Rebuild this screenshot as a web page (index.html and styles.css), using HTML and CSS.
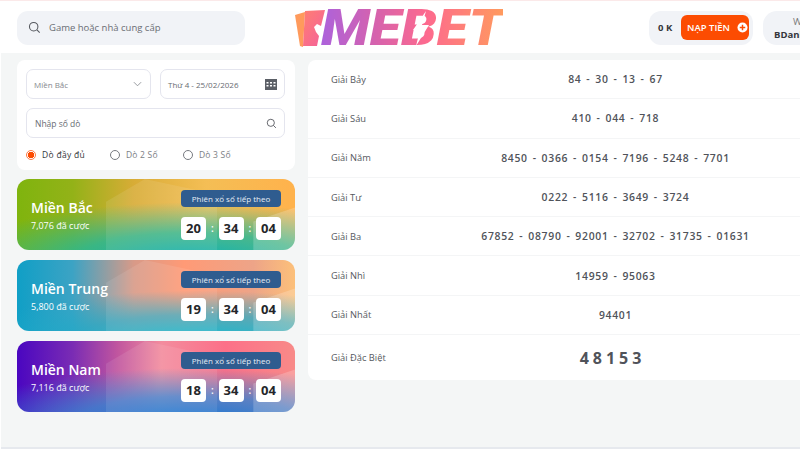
FILE: index.html
```html
<!DOCTYPE html>
<html lang="vi">
<head>
  <meta charset="UTF-8" />
  <meta name="viewport" content="width=device-width, initial-scale=1.0"/>
  <title>MEBET - Dò số</title>
  <link rel="stylesheet" href="styles.css">
</head>
<body>
  <header class="topbar">
    <div class="search-box">
      <svg class="icon-search" viewBox="0 0 16 16"><circle cx="7" cy="7" r="5.2"/><path d="M11 11l3.4 3.4"/></svg>
      <span>Game hoặc nhà cung cấp</span>
    </div>

    <div class="logo">
      <svg class="logo-cards" viewBox="0 0 30 38">
        <defs>
          <linearGradient id="cardFront" x1="0" y1="0" x2="1" y2="1">
            <stop offset="0" stop-color="#ff7f72"/>
            <stop offset="1" stop-color="#f4609c"/>
          </linearGradient>
        </defs>
        <path d="M0 6l10-3-2 35-3-1z" fill="#ff9a5c"/>
        <path d="M10 2l20-1-4 16-4-2-3 3 2 5 3 4-2 10H8z" fill="url(#cardFront)"/>
      </svg>
      <span class="logo-text">MEBET</span>
      <svg class="logo-bolt" viewBox="0 0 18 36"><path d="M15 0L2 19h7L5 35l13-21h-7z"/></svg>
    </div>

    <div class="wallet">
      <span class="balance">0 K</span>
      <button class="deposit">NẠP TIỀN
        <svg viewBox="0 0 12 12"><circle cx="6" cy="6" r="5.5" fill="#fff"/><path d="M6 3v6M3 6h6" stroke="#fc4c02" stroke-width="1.6"/></svg>
      </button>
    </div>

    <div class="user-chip">
      <div class="user-hello">Wel</div>
      <div class="user-name">BDanh</div>
    </div>
  </header>

  <main class="content">
    <section class="sidebar">
      <div class="filter-card">
        <div class="filter-row">
          <div class="field field-half">
            <span class="field-muted">Miền Bắc</span>
            <svg class="icon-chevron" viewBox="0 0 10 6"><path d="M1 1l4 4 4-4"/></svg>
          </div>
          <div class="field field-half">
            <span>Thứ 4 - 25/02/2026</span>
            <svg class="icon-calendar" viewBox="0 0 12 12">
              <path fill="#5b5f66" d="M0 1h12v11H0z"/>
              <path fill="#fff" d="M1.500 4h2v1.500h-2zM5 4h2v1.500H5zM8.500 4h2v1.500h-2zM1.500 7h2v1.500h-2zM5 7h2v1.500H5zM8.500 7h2v1.500h-2z"/>
            </svg>
          </div>
        </div>
        <div class="field field-search">
          <span>Nhập số dò</span>
          <svg class="icon-search small" viewBox="0 0 16 16"><circle cx="7" cy="7" r="5.200"/><path d="M11 11l3.400 3.400"/></svg>
        </div>
        <div class="radios">
          <label class="radio active"><i></i>Dò đầy đủ</label>
          <label class="radio"><i></i>Dò 2 Số</label>
          <label class="radio"><i></i>Dò 3 Số</label>
        </div>
      </div>

      <div class="region-card bac">
        <div class="region-info">
          <h3>Miền Bắc</h3>
          <p>7,076 đã cược</p>
        </div>
        <div class="region-timer">
          <div class="next-label">Phiên xổ số tiếp theo</div>
          <div class="clock"><b>20</b><em>:</em><b>34</b><em>:</em><b>04</b></div>
        </div>
      </div>

      <div class="region-card trung">
        <div class="region-info">
          <h3>Miền Trung</h3>
          <p>5,800 đã cược</p>
        </div>
        <div class="region-timer">
          <div class="next-label">Phiên xổ số tiếp theo</div>
          <div class="clock"><b>19</b><em>:</em><b>34</b><em>:</em><b>04</b></div>
        </div>
      </div>

      <div class="region-card nam">
        <div class="region-info">
          <h3>Miền Nam</h3>
          <p>7,116 đã cược</p>
        </div>
        <div class="region-timer">
          <div class="next-label">Phiên xổ số tiếp theo</div>
          <div class="clock"><b>18</b><em>:</em><b>34</b><em>:</em><b>04</b></div>
        </div>
      </div>
    </section>

    <section class="results">
      <div class="prize-row"><span class="prize-name">Giải Bảy</span><span class="prize-nums">84 - 30 - 13 - 67</span></div>
      <div class="prize-row"><span class="prize-name">Giải Sáu</span><span class="prize-nums">410 - 044 - 718</span></div>
      <div class="prize-row"><span class="prize-name">Giải Năm</span><span class="prize-nums">8450 - 0366 - 0154 - 7196 - 5248 - 7701</span></div>
      <div class="prize-row"><span class="prize-name">Giải Tư</span><span class="prize-nums">0222 - 5116 - 3649 - 3724</span></div>
      <div class="prize-row"><span class="prize-name">Giải Ba</span><span class="prize-nums">67852 - 08790 - 92001 - 32702 - 31735 - 01631</span></div>
      <div class="prize-row"><span class="prize-name">Giải Nhì</span><span class="prize-nums">14959 - 95063</span></div>
      <div class="prize-row"><span class="prize-name">Giải Nhất</span><span class="prize-nums">94401</span></div>
      <div class="prize-row special"><span class="prize-name">Giải Đặc Biệt</span><span class="prize-nums">48153</span></div>
    </section>
  </main>
  <div class="page-end"></div>
</body>
</html>
```

FILE: styles.css
```css
* {
  box-sizing: border-box;
}

html, body {
  margin: 0;
  height: 450px;
  overflow: hidden;
}

body {
  width: 800px;
  font-family: "Open Sans", "Noto Sans", sans-serif;
  background-color: #fff;
  color: #50535a;
  padding-left: 1px;
}

/* header */
.topbar {
  display: flex;
  align-items: center;
  height: 53px;
  margin-left: -1px;
  padding-left: 17px;
  padding-top: 1px;
  background-color: #fff;
  border-top: 1px solid #fbe9e9;
  width: 900px;
}

.search-box {
  display: flex;
  align-items: center;
  flex-shrink: 0;
  width: 228px;
  height: 34px;
  padding-left: 11px;
  gap: 8px;
  background-color: #f1f3f7;
  border-radius: 11px;
  font-size: 9.5px;
  color: #6a6d74;
}

.icon-search {
  width: 13px;
  height: 13px;
  fill: none;
  stroke: #55585e;
  stroke-width: 1.300;
}

.icon-search.small {
  width: 11px;
  height: 11px;
}

.logo {
  position: relative;
  display: flex;
  align-items: center;
  flex-shrink: 0;
  width: 210px;
  height: 40px;
  margin-left: 50px;
}

.logo-cards {
  width: 30px;
  height: 38px;
  flex-shrink: 0;
}

.logo-text {
  margin-left: -4px;
  font-family: Roboto, "Open Sans", sans-serif;
  font-size: 50px;
  line-height: 1.2;
  font-weight: 900;
  font-style: italic;
  background: linear-gradient(90deg, #ac62dc 0%, #d662ad 30%, #fd6a8e 58%, #ff9a5e 100%);
  -webkit-background-clip: text;
  background-clip: text;
  color: transparent;
  transform: scaleX(1.147);
  transform-origin: left center;
}

/* the bolt sits on top of the B */
.logo-bolt {
  position: absolute;
  left: 116px;
  top: 3px;
  width: 18px;
  height: 36px;
  fill: #fff;
}

.wallet {
  display: flex;
  align-items: center;
  justify-content: space-between;
  flex-shrink: 0;
  width: 104px;
  height: 34px;
  margin-left: 144px;
  padding: 0 4px 0 9px;
  background-color: #f1f3f7;
  border-radius: 12px;
}

.balance {
  font-size: 9.500px;
  font-weight: 700;
  color: #34363b;
}

.deposit {
  display: flex;
  align-items: center;
  gap: 7px;
  width: 68px;
  height: 25px;
  padding: 0 0 0 6px;
  border: 0;
  border-radius: 6px;
  background-color: #fc4c02;
  color: #fff;
  font-family: inherit;
  font-size: 9.500px;
  font-weight: 600;
}

.deposit svg {
  width: 11px;
  height: 11px;
}

.user-chip {
  flex-shrink: 0;
  width: 90px;
  height: 34px;
  margin-left: 10px;
  padding: 4px 0 0 11px;
  background-color: #f1f3f7;
  border-radius: 14px;
  font-size: 9.500px;
}

.user-hello {
  margin-left: 19px;
  color: #777;
  line-height: 13px;
}

.user-name {
  font-weight: 700;
  color: #34363b;
  line-height: 13px;
}

/* main area */
.content {
  display: flex;
  align-items: flex-start;
  height: 394px;
  padding: 7px 0 0 16px;
  background-color: #f4f6f6;
}

.sidebar {
  display: flex;
  flex-direction: column;
  gap: 10px;
  width: 278px;
  flex-shrink: 0;
}

.filter-card {
  height: 110px;
  padding: 9px 10px 0 9px;
  margin-bottom: -1px;
  background-color: #fff;
  border-radius: 8px;
}

.filter-row {
  display: flex;
  gap: 9px;
}

.field {
  display: flex;
  align-items: center;
  justify-content: space-between;
  height: 30px;
  border: 1px solid #e4e5ee;
  border-radius: 7px;
  font-size: 8px;
  color: #686b72;
}

.field-half {
  flex: 1;
  padding: 0 7px;
}

.field-muted {
  color: #85888e;
}

.field-search {
  margin-top: 9px;
  padding: 0 7px 0 8px;
  font-size: 8.500px;
}

.icon-chevron {
  width: 9px;
  height: 6px;
  margin-right: 1px;
  fill: none;
  stroke: #8b8e94;
  stroke-width: 1;
}

.icon-calendar {
  width: 12px;
  height: 12px;
}

.radios {
  display: flex;
  margin-top: 11px;
  font-size: 8.500px;
}

.radio {
  display: flex;
  align-items: center;
  gap: 6px;
  width: 73px;
  color: #7b7e84;
  letter-spacing: 0.200px;
}

.radio i {
  width: 10px;
  height: 10px;
  border: 1px solid #777a80;
  border-radius: 50%;
}

.radio.active {
  width: 84px;
  color: #34363b;
  font-weight: 500;
  letter-spacing: 0.300px;
}

.radio.active i {
  border-color: #fc7a45;
  background: radial-gradient(circle, #fc4c02 0 3px, #fff 3.500px);
}

/* region cards */
.region-card {
  position: relative;
  overflow: hidden;
  display: flex;
  align-items: center;
  justify-content: space-between;
  height: 71px;
  padding: 0 14px;
  border-radius: 12px;
  color: #fff;
}

.region-card > div {
  position: relative;
  z-index: 1;
}

/* faceted light shapes over the card background */
.region-card::before {
  content: "";
  position: absolute;
  inset: 0;
  background: rgba(255, 255, 255, 0.09);
  clip-path: polygon(32% 32%, 46% 0, 72% 22%, 72% 100%, 32% 100%);
}

.region-card::after {
  content: "";
  position: absolute;
  inset: 0;
  background: rgba(255, 255, 255, 0.2);
  clip-path: polygon(85% 60%, 100% 40%, 100% 100%, 85% 100%);
}

.region-card.bac {
  background:
    radial-gradient(ellipse 85% 85% at 62% 118%, rgba(8, 176, 184, 1) 0%, rgba(30, 184, 155, 0.8) 50%, rgba(60, 190, 150, 0) 100%),
    linear-gradient(90deg, #7fb40e 0%, #93b218 20%, #d8ac36 42%, #f4be55 68%, #ffb24c 100%);
}

.region-card.trung {
  background:
    radial-gradient(ellipse 85% 75% at 65% 118%, rgba(8, 190, 215, 1) 0%, rgba(30, 170, 200, 0.7) 55%, rgba(30, 170, 200, 0) 100%),
    linear-gradient(90deg, #109fc6 0%, #3ca3c4 20%, #d89a88 42%, #ff9a76 60%, #eda488 85%, #fcc07a 100%);
}

.region-card.nam {
  background:
    radial-gradient(ellipse 85% 80% at 62% 118%, rgba(14, 120, 215, 1) 0%, rgba(50, 130, 210, 0.8) 50%, rgba(60, 140, 210, 0) 100%),
    linear-gradient(90deg, #4a06c0 0%, #7a2cb4 20%, #c0559f 36%, #f38c9e 52%, #fc7088 75%, #f88a88 100%);
}

.region-info h3 {
  margin: 0 0 2px;
  font-size: 14px;
  line-height: 20px;
  font-weight: 600;
}

.region-info p {
  margin: 0;
  font-size: 9px;
  line-height: 12px;
}

.region-timer {
  width: 100px;
}

.next-label {
  height: 17px;
  margin-bottom: 10px;
  background-color: #2f5c8f;
  border-radius: 4px;
  text-align: center;
  font-size: 8px;
  line-height: 17px;
  color: #e6edf5;
}

.clock {
  display: flex;
  align-items: center;
  justify-content: space-between;
}

.clock b {
  width: 25px;
  height: 23px;
  background-color: #fff;
  border-radius: 4px;
  text-align: center;
  font-size: 13px;
  line-height: 23px;
  font-weight: 700;
  color: #24262a;
}

.clock em {
  font-style: normal;
  font-size: 10px;
  font-weight: 600;
}

/* results table */
.results {
  flex-shrink: 0;
  width: 492px;
  margin-left: 13px;
  background-color: #fff;
  border-radius: 8px 0 0 8px;
}

.prize-row {
  display: flex;
  align-items: center;
  height: 39.300px;
  padding-left: 23px;
  border-bottom: 1px solid #f4f5f6;
}

.prize-name {
  width: 100px;
  flex-shrink: 0;
  font-size: 9.300px;
  font-weight: 500;
  color: #55585e;
}

.prize-nums {
  flex: 1;
  text-align: center;
  font-size: 10.400px;
  font-weight: 600;
  letter-spacing: 0.700px;
  word-spacing: 1.500px;
  color: #50535a;
}

.prize-row.special {
  height: 45px;
  border-bottom: 0;
}

.prize-row.special .prize-nums {
  padding-right: 6px;
  font-size: 16px;
  font-weight: 700;
  letter-spacing: 4px;
}

.page-end {
  height: 2px;
  background-color: #e6e9ee;
}
```
